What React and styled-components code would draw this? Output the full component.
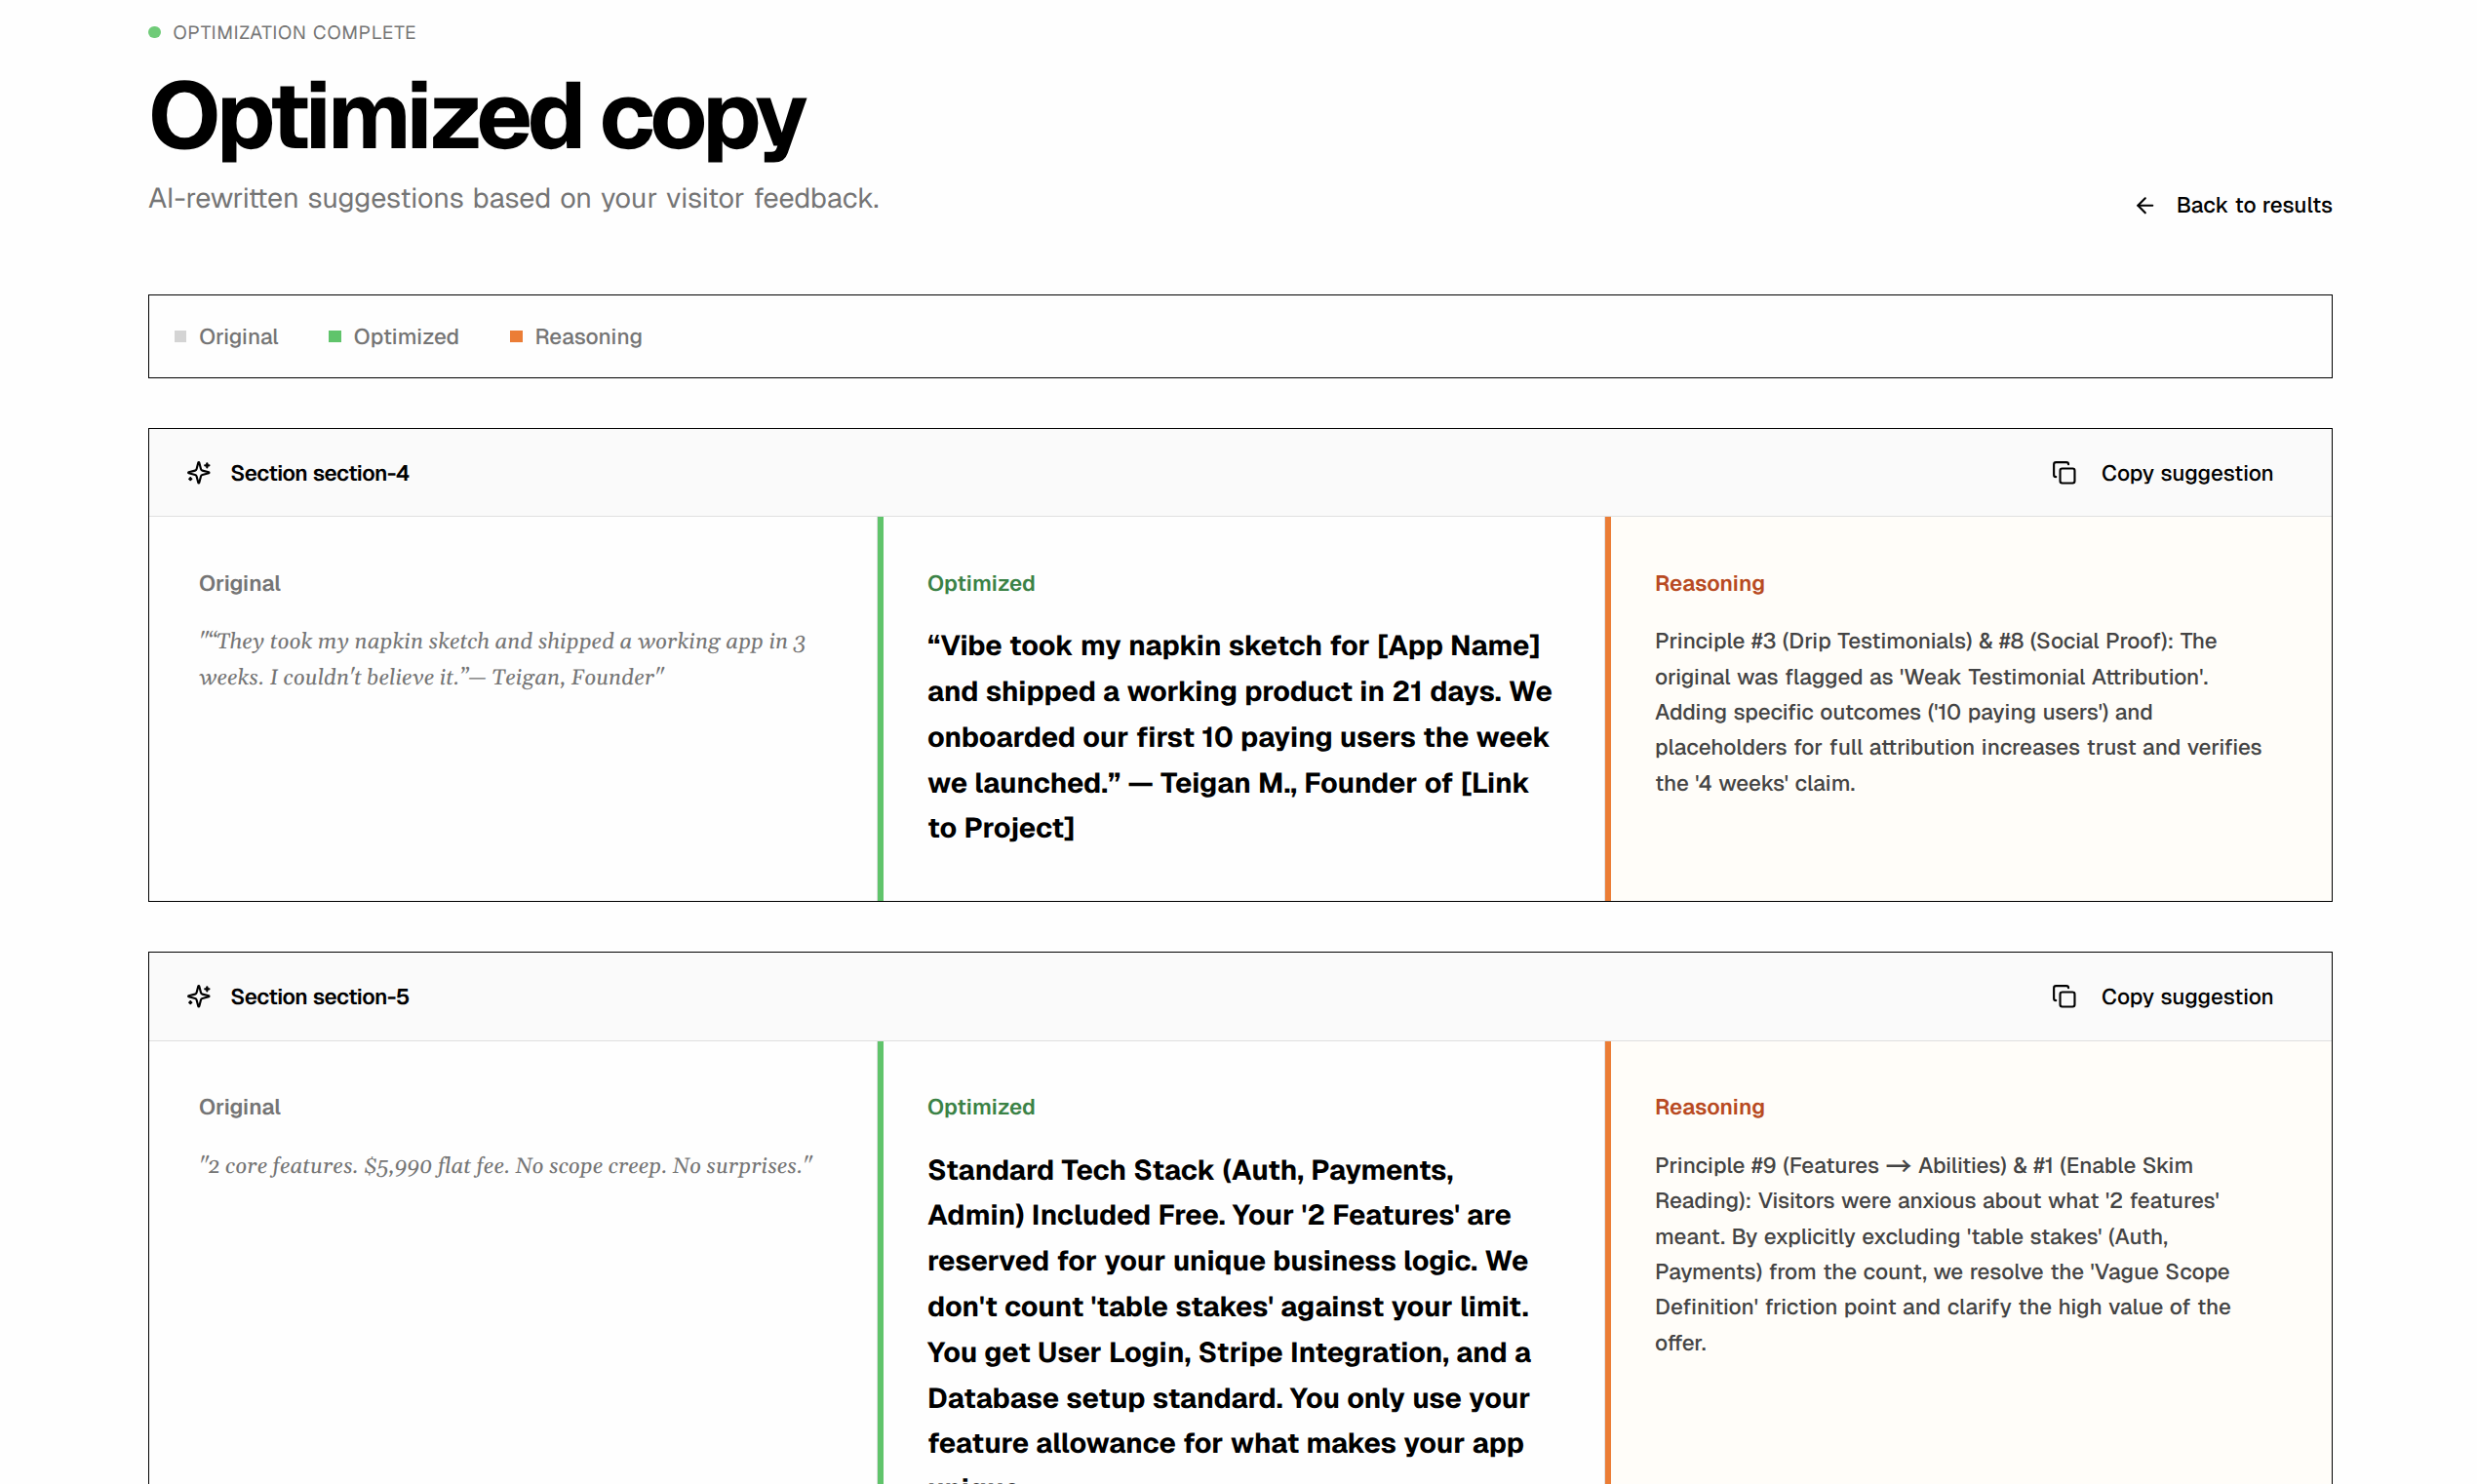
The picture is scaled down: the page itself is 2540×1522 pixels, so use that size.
import styled, { createGlobalStyle } from "styled-components";
import { ArrowLeft, Copy } from "lucide-react";

const GlobalStyle = createGlobalStyle`
  *,
  *::before,
  *::after {
    box-sizing: border-box;
  }
  body {
    margin: 0;
    height: 1522px;
    overflow: hidden;
    background-color: #fefefe;
    color: #000;
    font-family: Geist, Inter, "Liberation Sans", sans-serif;
    text-rendering: geometricPrecision;
    word-spacing: 0.045em;
    -webkit-font-smoothing: antialiased;
  }
  h1, h2, h3, p {
    margin: 0;
  }
`;

const Page = styled.main`
  width: 2240px;
  margin: 0 auto 0 152px;
  padding-top: 17px;
`;

const Header = styled.header`
  display: flex;
  justify-content: space-between;
  align-items: flex-end;
  height: 209.4px;
`;

const Heading = styled.div`
  height: 100%;
`;

const Status = styled.div`
  display: flex;
  align-items: center;
  gap: 12.8px;
  height: 32px;
  color: #757575;
  font-size: 19.2px;
  letter-spacing: 0.044em;
  text-transform: uppercase;
`;

const StatusDot = styled.span`
  width: 12.8px;
  height: 12.8px;
  border-radius: 50%;
  background-color: #6fcb78;
`;

const Title = styled.h1`
  margin-top: 22px;
  font-size: 96px;
  font-weight: 700;
  line-height: 96px;
  letter-spacing: -0.0495em;
`;

const Subtitle = styled.p`
  margin-top: 14px;
  color: #757575;
  font-size: 28.8px;
  line-height: 46.8px;
  word-spacing: 0.056em;
`;

const TextButton = styled.button`
  display: flex;
  align-items: center;
  gap: ${({ $gap }) => $gap || "19.2px"};
  height: 32px;
  padding: ${({ $padding }) => $padding || "0"};
  border: none;
  background: none;
  color: #000;
  font-family: inherit;
  font-size: 22.4px;
  font-weight: 500;
  text-rendering: inherit;
  word-spacing: 0.035em;
  white-space: nowrap;
  cursor: pointer;
`;

const Legend = styled.div`
  display: flex;
  gap: 51.6px;
  margin-top: 76px;
  padding: 25.6px;
  border: 1px solid #000;
`;

const LegendItem = styled.div`
  display: flex;
  align-items: center;
  gap: 12.8px;
  height: 32px;
  color: #757575;
  font-size: 22.4px;
  font-weight: 500;
  &::before {
    content: "";
    width: 12.8px;
    height: 12px;
    background-color: ${({ $color }) => $color};
  }
`;

const Card = styled.section`
  margin-top: 51.2px;
  border: 1px solid #000;
`;

const CardHeader = styled.div`
  display: flex;
  justify-content: space-between;
  align-items: center;
  height: 90.6px;
  padding: 0 38.4px;
  border-bottom: 1px solid #e0e0e0;
  background-color: #fafafa;
`;

const CardTitle = styled.h2`
  display: flex;
  align-items: center;
  gap: 19.2px;
  font-size: 22.4px;
  font-weight: 600;
  letter-spacing: -0.022em;
`;

const Columns = styled.div`
  display: grid;
  grid-template-columns: 746px 1fr 1fr;
  gap: 1px;
  background-color: #e0e0e0;
`;

const Column = styled.div`
  padding: 51.2px 51px 50px;
  background-color: ${({ $background }) => $background || "#fefefe"};
  box-shadow: ${({ $accent }) => ($accent ? `inset 6px 0 0 ${$accent}` : "none")};
`;

const ColumnLabel = styled.h3`
  margin-bottom: 25.6px;
  color: ${({ $color }) => $color};
  font-size: 22.4px;
  font-weight: 600;
  line-height: 32px;
`;

const OriginalText = styled.p`
  padding-top: 2px;
  color: #757575;
  font-family: Georgia, Gelasio, "Liberation Serif", serif;
  font-size: 22.4px;
  font-style: italic;
  line-height: 36.4px;
  white-space: pre;
  word-spacing: normal;
`;

const OptimizedText = styled.p`
  padding-top: 1px;
  font-size: 28.8px;
  font-weight: 700;
  line-height: 46.8px;
  white-space: pre;
  word-spacing: 0.022em;
`;

const ReasoningText = styled.p`
  color: #444;
  font-size: 22.4px;
  font-weight: 500;
  line-height: 36.4px;
  white-space: pre;
  word-spacing: 0.044em;
`;

const Arrow = styled.span`
  font-family: "Noto Sans CJK JP", sans-serif;
  font-size: 27px;
  font-weight: 500;
  line-height: 0;
  vertical-align: -3px;
`;

const legend = [
  { label: "Original", color: "#d4d4d4" },
  { label: "Optimized", color: "#60c46b" },
  { label: "Reasoning", color: "#eb7d36" },
];

const sections = [
  {
    id: "section-4",
    original: `"“They took my napkin sketch and shipped a working app in 3
weeks. I couldn't believe it.”— Teigan, Founder"`,
    optimized: `“Vibe took my napkin sketch for [App Name]
and shipped a working product in 21 days. We
onboarded our first 10 paying users the week
we launched.” — Teigan M., Founder of [Link
to Project]`,
    reasoning: `Principle #3 (Drip Testimonials) & #8 (Social Proof): The
original was flagged as 'Weak Testimonial Attribution'.
Adding specific outcomes ('10 paying users') and
placeholders for full attribution increases trust and verifies
the '4 weeks' claim.`,
  },
  {
    id: "section-5",
    original: `"2 core features. $5,990 flat fee. No scope creep. No surprises."`,
    optimized: `Standard Tech Stack (Auth, Payments,
Admin) Included Free. Your '2 Features' are
reserved for your unique business logic. We
don't count 'table stakes' against your limit.
You get User Login, Stripe Integration, and a
Database setup standard. You only use your
feature allowance for what makes your app
unique.`,
    reasoning: (
      <>
        {"Principle #9 (Features "}
        <Arrow>→</Arrow>
        {` Abilities) & #1 (Enable Skim
Reading): Visitors were anxious about what '2 features'
meant. By explicitly excluding 'table stakes' (Auth,
Payments) from the count, we resolve the 'Vague Scope
Definition' friction point and clarify the high value of the
offer.`}
      </>
    ),
  },
];

function SparklesIcon() {
  return (
    <svg
      width="25.6"
      height="25.6"
      viewBox="0 0 24 24"
      fill="none"
      stroke="currentColor"
      strokeWidth="2"
      strokeLinecap="round"
      strokeLinejoin="round"
    >
      <path d="M9.937 15.5A2 2 0 0 0 8.5 14.063l-6.135-1.582a.5.5 0 0 1 0-.962L8.5 9.936A2 2 0 0 0 9.937 8.5l1.582-6.135a.5.5 0 0 1 .963 0L14.063 8.5A2 2 0 0 0 15.5 9.937l6.135 1.581a.5.5 0 0 1 0 .964L15.5 14.063a2 2 0 0 0-1.437 1.437l-1.582 6.135a.5.5 0 0 1-.963 0z" />
      <path d="M20 3v4" />
      <path d="M22 5h-4" />
      <path d="M4 17v2" />
      <path d="M5 18H3" />
    </svg>
  );
}

function Suggestion({ section }) {
  return (
    <Card>
      <CardHeader>
        <CardTitle>
          <SparklesIcon />
          Section {section.id}
        </CardTitle>
        <TextButton $gap="25.6px" $padding="0 20.8px">
          <Copy size={25.6} strokeWidth={2} />
          Copy suggestion
        </TextButton>
      </CardHeader>
      <Columns>
        <Column>
          <ColumnLabel $color="#757575">Original</ColumnLabel>
          <OriginalText>{section.original}</OriginalText>
        </Column>
        <Column $accent="#60c46b">
          <ColumnLabel $color="#3b8246">Optimized</ColumnLabel>
          <OptimizedText>{section.optimized}</OptimizedText>
        </Column>
        <Column $background="#fffdf9" $accent="#eb7d36">
          <ColumnLabel $color="#b84a22">Reasoning</ColumnLabel>
          <ReasoningText>{section.reasoning}</ReasoningText>
        </Column>
      </Columns>
    </Card>
  );
}

export default function App() {
  return (
    <>
      <GlobalStyle />
      <Page>
        <Header>
          <Heading>
            <Status>
              <StatusDot />
              Optimization complete
            </Status>
            <Title>Optimized copy</Title>
            <Subtitle>
              AI-rewritten suggestions based on your visitor feedback.
            </Subtitle>
          </Heading>
          <TextButton>
            <ArrowLeft size={25.6} strokeWidth={2} />
            Back to results
          </TextButton>
        </Header>
        <Legend>
          {legend.map((item) => (
            <LegendItem key={item.label} $color={item.color}>
              {item.label}
            </LegendItem>
          ))}
        </Legend>
        {sections.map((section) => (
          <Suggestion key={section.id} section={section} />
        ))}
      </Page>
    </>
  );
}
